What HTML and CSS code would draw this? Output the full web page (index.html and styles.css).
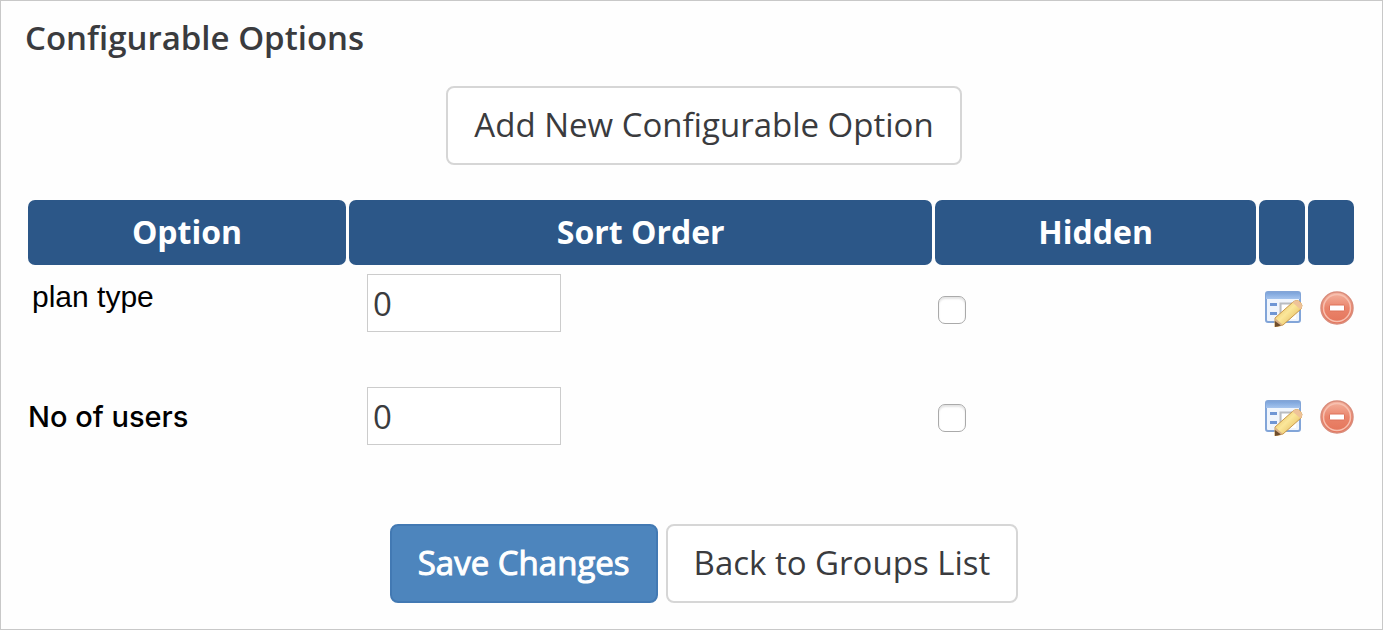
FILE: index.html
```html
<!DOCTYPE html>
<html lang="en">
<head>
<meta charset="utf-8">
<title>Configurable Options</title>
<link rel="stylesheet" href="styles.css">
</head>
<body>
<svg class="defs" aria-hidden="true">
  <defs>
    <linearGradient id="bar" x1="0" y1="0" x2="0" y2="1"><stop offset="0" stop-color="#7fa6dc"/><stop offset="1" stop-color="#a5c4ee"/></linearGradient>
    <linearGradient id="pencil" x1="0" y1="0" x2="1" y2="1"><stop offset="0" stop-color="#e0b04e"/><stop offset=".45" stop-color="#fbe79a"/><stop offset="1" stop-color="#d9a53f"/></linearGradient>
    <linearGradient id="red" x1="0" y1="0" x2="0" y2="1"><stop offset="0" stop-color="#f4b4a0"/><stop offset=".5" stop-color="#ea846b"/><stop offset="1" stop-color="#e4745a"/></linearGradient>
    <symbol id="edit" viewBox="0 0 38 36">
      <rect x="1" y="1" width="34" height="30" rx="2" fill="#f0f5fc" stroke="#82a5d8" stroke-width="2"/>
      <path d="M1 2h34v6H1z" fill="url(#bar)"/>
      <path d="M5 13.500h7M5 22.500h7" stroke="#6f96d4" stroke-width="3"/>
      <path d="M17 13h14v15H17z" fill="#fff"/>
      <path d="M15.500 24V12.500H31" fill="none" stroke="#b9bcc0" stroke-width="2"/>
      <path d="M10 27 27.500 11.500q4-3.500 7.500-.5 3.500 3 1 7L18 34 10 36z" fill="url(#pencil)" stroke="#c9994b"/>
      <path d="m27.500 11.500 8 7q3.500-4-.500-7.500-3.500-3-7.500.500z" fill="#efc398"/>
      <path d="m10 27 8 7-8 2z" fill="#d9b184"/>
      <path d="m10 30 6 4.500-6 1.500z" fill="#6f4d2c"/>
    </symbol>
    <symbol id="remove" viewBox="0 0 34 34">
      <circle cx="17" cy="17" r="16" fill="url(#red)" stroke="#d98c7b" stroke-width="1.500"/>
      <circle cx="17" cy="17" r="13.500" fill="none" stroke="#f7c0b0" stroke-width="1.500"/>
      <rect x="9.500" y="14" width="15" height="6" rx="1" fill="#fff" stroke="#de725b"/>
    </symbol>
  </defs>
</svg>
<main class="panel">
  <h1 class="title">Configurable Options</h1>
  <div class="actions"><button type="button" class="btn">Add New Configurable Option</button></div>
  <table class="options">
    <colgroup><col class="c-option"><col class="c-sort"><col class="c-hidden"><col class="c-icon"><col class="c-icon"></colgroup>
    <thead>
      <tr><th>Option</th><th>Sort Order</th><th>Hidden</th><th></th><th></th></tr>
    </thead>
    <tbody>
      <tr class="row-plan">
        <td class="name"><label for="sort1">plan type</label></td>
        <td class="sort"><input id="sort1" class="field" type="text" value="0"></td>
        <td class="hide"><input class="check" type="checkbox" aria-label="Hide plan type"></td>
        <td class="tool"><button type="button" class="icon-btn" aria-label="Edit plan type"><svg class="edit"><use href="#edit"/></svg></button></td>
        <td class="tool tool-end"><button type="button" class="icon-btn" aria-label="Delete plan type"><svg class="remove"><use href="#remove"/></svg></button></td>
      </tr>
      <tr class="row-users">
        <td class="name"><label for="sort2">No of users</label></td>
        <td class="sort"><input id="sort2" class="field" type="text" value="0"></td>
        <td class="hide"><input class="check" type="checkbox" aria-label="Hide No of users"></td>
        <td class="tool"><button type="button" class="icon-btn" aria-label="Edit No of users"><svg class="edit"><use href="#edit"/></svg></button></td>
        <td class="tool tool-end"><button type="button" class="icon-btn" aria-label="Delete No of users"><svg class="remove"><use href="#remove"/></svg></button></td>
      </tr>
    </tbody>
  </table>
  <div class="actions"><button type="button" class="btn btn-primary">Save Changes</button><button type="button" class="btn">Back to Groups List</button></div>
</main>
</body>
</html>
```
FILE: styles.css
```css
* { box-sizing: border-box; }
body { margin: 0; background: #fefefe; color: #3a3b3e; font-family: "Open Sans", sans-serif; }
.defs { display: block; width: 0; height: 0; }
.panel { min-height: 100vh; padding: 15px 25px 26px 24px; border: 1px solid #c8c8c8; }
.title { margin: 0 0 26px; font-size: 33px; font-weight: 600; line-height: 44px; }
.actions { display: flex; justify-content: center; gap: 8px; padding-left: 26px; }
.btn {
  height: 79px; padding: 0 26px 2px; border: 2px solid #d6d6d6; border-radius: 8px;
  background: #fff; color: #3a3b3e; font: 400 33px "Open Sans", sans-serif;
}
.btn-primary { border-color: #4279b3; background: #4d85bd; color: #fff; -webkit-text-stroke: 1px #fff; }
.options { width: 100%; margin: 32px 0 30px; border-spacing: 3px; table-layout: fixed; }
.c-option { width: 24.200%; }
.c-hidden { width: 24.400%; }
.c-icon { width: 46px; }
th { height: 65px; padding: 0 0 2px; border-radius: 7px; background: #2c5788; color: #fff; font-size: 32px; font-weight: 700; line-height: 46px; }
td { height: 110px; padding: 0; vertical-align: top; }
.name { color: #000; line-height: 36px; }
.row-plan .name { padding: 11px 4px; font-family: "Liberation Sans", sans-serif; font-size: 30px; }
.row-users .name { padding: 18px 0; font-family: Inter, sans-serif; font-size: 29px; font-weight: 500; white-space: nowrap; }
.sort { padding: 6px 18px; }
.field {
  display: block; width: 194px; height: 58px; padding: 0 5px; border: 1px solid #ccc; border-radius: 0;
  background: #fff; color: #3a3b3e; font: 400 33px "Open Sans", sans-serif;
}
.hide { padding: 28px 3px; }
.check {
  appearance: none; display: block; width: 28px; height: 28px; margin: 0;
  border: 1px solid #aaa; border-radius: 7px; background: #fff; box-shadow: inset 0 2px 2px #e4e4e4;
}
.check:checked { background: #4d85bd; }
.tool { padding: 23px 0 0 6px; }
.tool-end { padding-left: 12px; }
.row-users .hide { padding-top: 23px; }
.row-users .tool { padding-top: 19px; }
.icon-btn { display: block; padding: 0; border: 0; background: none; }
.icon-btn svg { display: block; }
.edit { width: 38px; height: 36px; }
.remove { width: 34px; height: 34px; }
```
